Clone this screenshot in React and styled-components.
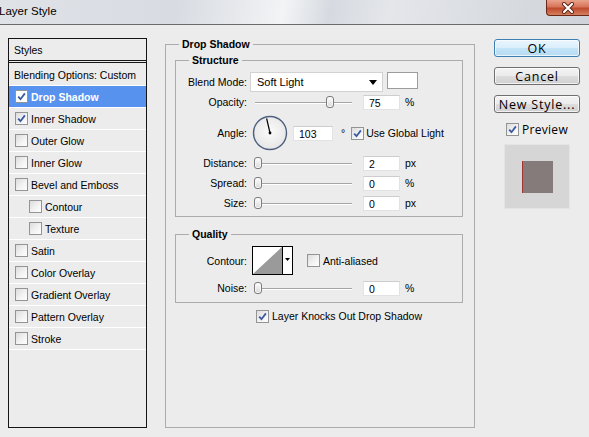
import React from "react";
import styled, { createGlobalStyle } from "styled-components";

const GlobalStyle = createGlobalStyle`
  html, body {
    margin: 0;
    padding: 0;
    background: #ececec;
  }
  body {
    font-family: "Liberation Sans", Arial, sans-serif;
    font-size: 10.5px;
    color: #000;
  }
  * {
    box-sizing: border-box;
  }
`;

const Window = styled.div`
  width: 589px;
  height: 437px;
  overflow: hidden;
  background: #ececec;
  display: flex;
  flex-direction: column;
`;

const TitleBar = styled.div`
  flex: none;
  height: 25px;
  display: flex;
  justify-content: space-between;
  align-items: flex-start;
  border-bottom: 1px solid #6b6b6b;
  background: linear-gradient(
    100deg,
    #dfe2e7 0%,
    #d8dce2 30%,
    #e9ebee 42%,
    #f3f4f6 48%,
    #d6dae0 56%,
    #e4e6ea 66%,
    #cfd3d9 100%
  );
`;

const Title = styled.div`
  font-size: 11.5px;
  line-height: 14px;
  padding-top: 4px;
  margin-left: -1px;
`;

const CloseButton = styled.div`
  width: 43px;
  height: 16px;
  display: flex;
  align-items: center;
  justify-content: center;
  border: 1px solid #6b2818;
  border-top: none;
  border-right: none;
  border-bottom-left-radius: 4px;
  background: linear-gradient(#e9a38c 0%, #d77458 45%, #bf4a2d 55%, #d4805f 100%);
`;

const Body = styled.div`
  display: flex;
  align-items: flex-start;
  padding: 13px 0 0 8px;
`;

/* ---------- Styles list ---------- */

const StylesPanel = styled.div`
  flex: none;
  width: 139px;
  height: 390px;
  border: 1px solid #151515;
`;

const PanelHeader = styled.div`
  height: 22px;
  padding-left: 5px;
  display: flex;
  align-items: center;
  border-bottom: 1px solid #151515;
`;

const StyleList = styled.div`
  margin-top: 1px;
  border-top: 1px solid #151515;
  padding-top: 1px;
`;

const StyleRow = styled.div`
  height: 22px;
  display: flex;
  align-items: center;
  gap: 3px;
  padding-left: ${(p) => (p.$plain ? 5 : p.$sub ? 20 : 6)}px;
  border-bottom: 1px solid #fff;
  background: ${(p) => (p.$selected ? "#5792ef" : "transparent")};
  color: ${(p) => (p.$selected ? "#fff" : "#000")};
  font-weight: ${(p) => (p.$selected ? "bold" : "normal")};
`;

/* ---------- Checkbox ---------- */

const CheckBox = styled.span`
  flex: none;
  width: 13px;
  height: 13px;
  display: inline-flex;
  align-items: center;
  justify-content: center;
  border: 1px solid #939494;
  background: ${(p) =>
    p.$white ? "#fff" : "linear-gradient(135deg, #dcdcdc 0%, #f4f4f4 60%, #fdfdfd 100%)"};
`;

const Check = ({ checked, white }) => (
  <CheckBox $white={white}>
    {checked && (
      <svg width="9" height="9" viewBox="0 0 9 9">
        <path d="M1.2 4.6 L3.5 7.2 L7.9 1.4" fill="none" stroke="#3b5aa2" strokeWidth="1.8" />
      </svg>
    )}
  </CheckBox>
);

/* ---------- Group boxes ---------- */

const Group = styled.fieldset`
  margin: ${(p) => p.$mt || 0}px 0 0 ${(p) => p.$ml || 0}px;
  min-width: 0;
  border: 1px solid #acacac;
  padding: ${(p) => p.$pad};
  width: ${(p) => (p.$w ? `${p.$w}px` : "auto")};
  height: ${(p) => (p.$h ? `${p.$h}px` : "auto")};
  flex: none;
`;

const GroupTitle = styled.legend`
  font-weight: bold;
  font-size: 10.5px;
  line-height: 13px;
  padding: 0 3px;
  margin-left: ${(p) => p.$indent}px;
`;

const Row = styled.div`
  display: flex;
  align-items: center;
  height: ${(p) => p.$h}px;
  margin-top: ${(p) => p.$mt || 0}px;
  padding-left: ${(p) => p.$pl || 0}px;
`;

const Inline = styled.span`
  display: flex;
  align-items: center;
  margin-left: ${(p) => p.$ml}px;
`;

const Label = styled.span`
  flex: none;
  width: 71px;
  margin-right: 5px;
  text-align: right;
`;

const Select = styled.div`
  flex: none;
  width: 133px;
  height: 20px;
  margin-left: -2px;
  padding: 0 5px 0 6px;
  display: flex;
  align-items: center;
  justify-content: space-between;
  background: #fff;
  border: 1px solid #d2d2d2;
  font-size: 11px;
`;

const Swatch = styled.div`
  flex: none;
  align-self: flex-start;
  width: 31px;
  height: 17px;
  margin-left: 4px;
  background: #fff;
  border: 1px solid #9c9c9c;
`;

const Field = styled.div`
  flex: none;
  width: ${(p) => p.$w || 37}px;
  height: 15px;
  margin-left: ${(p) => p.$ml ?? 11}px;
  padding-left: 5px;
  line-height: 14px;
  background: #fff;
  border: 1px solid #e2e2e2;
  border-top-color: #cdcdcd;
`;

const Unit = styled.span`
  margin-left: ${(p) => p.$ml || 5}px;
`;

const Track = styled.div`
  position: relative;
  flex: none;
  width: 100px;
  height: 14px;
  &::before {
    content: "";
    position: absolute;
    left: 3px;
    right: 0;
    top: 7px;
    height: 1px;
    background: #a5a5a5;
    box-shadow: 0 1px 0 #fff;
  }
`;

const Thumb = styled.span`
  position: absolute;
  top: 1px;
  width: 8px;
  height: 12px;
  border: 1px solid #7c7c7c;
  border-radius: 3px;
  background: linear-gradient(#ffffff, #d9d9d9);
  box-shadow: inset 0 0 0 1px #f6f6f6;
`;

const Slider = ({ value }) => (
  <Track>
    <Thumb style={{ left: `${2 + value * 96}px` }} />
  </Track>
);

const DialWrap = styled.div`
  flex: none;
  width: 36px;
  height: 36px;
`;

const Dial = ({ angle }) => {
  const r = (angle * Math.PI) / 180;
  const x = 18 + 15 * Math.cos(r);
  const y = 18 - 15 * Math.sin(r);
  return (
    <DialWrap>
      <svg width="36" height="36" viewBox="0 0 36 36">
        <defs>
          <radialGradient id="dialFill" cx="50%" cy="45%" r="60%">
            <stop offset="0%" stopColor="#fbfbfb" />
            <stop offset="100%" stopColor="#e4e4e4" />
          </radialGradient>
        </defs>
        <circle cx="18" cy="18" r="16.5" fill="url(#dialFill)" stroke="#4f5f80" strokeWidth="1.4" />
        <line x1="18" y1="18" x2={x} y2={y} stroke="#000" strokeWidth="1.2" />
        <circle cx="18" cy="18" r="1.4" fill="#000" />
      </svg>
    </DialWrap>
  );
};

const ContourBox = styled.div`
  flex: none;
  width: 41px;
  height: 29px;
`;

const CheckLabel = styled.span`
  margin-left: ${(p) => p.$ml || 3}px;
`;

/* ---------- Right column ---------- */

const SideColumn = styled.div`
  flex: none;
  width: 86px;
  margin-left: 19px;
  display: flex;
  flex-direction: column;
  align-items: center;
`;

const Button = styled.div`
  width: 86px;
  height: 18px;
  margin-top: ${(p) => p.$mt}px;
  display: flex;
  align-items: center;
  justify-content: center;
  font-family: "Open Sans", "Liberation Sans", sans-serif;
  font-size: 12.5px;
  letter-spacing: 0.8px;
  border-radius: 3px;
  border: 1px solid ${(p) => (p.$primary ? "#3c7fb1" : "#707070")};
  background: ${(p) =>
    p.$primary
      ? "linear-gradient(#eaf5fd 0%, #d9eefb 50%, #c4e4f8 51%, #b6dbf3 100%)"
      : "linear-gradient(#f4f4f4 0%, #ebebeb 50%, #dddddd 51%, #d0d0d0 100%)"};
  box-shadow: inset 0 0 0 1px rgba(255, 255, 255, 0.7);
`;

const PreviewToggle = styled.div`
  margin-top: 10px;
  height: 12px;
  display: flex;
  align-items: center;
  gap: 3px;
  font-family: "Open Sans", "Liberation Sans", sans-serif;
  font-size: 12px;
  letter-spacing: 0.3px;
`;

const PreviewBox = styled.div`
  margin-top: 9px;
  width: 66px;
  height: 65px;
  display: flex;
  align-items: center;
  justify-content: center;
  background: #d6d6d6;
  border: 1px solid #e4e4e4;
`;

const PreviewSwatch = styled.div`
  width: 31px;
  height: 32px;
  background: #857b7b;
  border-left: 1px solid #a33232;
`;

const STYLES = [
  { label: "Drop Shadow", checked: true, selected: true },
  { label: "Inner Shadow", checked: true },
  { label: "Outer Glow" },
  { label: "Inner Glow" },
  { label: "Bevel and Emboss" },
  { label: "Contour", sub: true },
  { label: "Texture", sub: true },
  { label: "Satin" },
  { label: "Color Overlay" },
  { label: "Gradient Overlay" },
  { label: "Pattern Overlay" },
  { label: "Stroke" },
];

export default function App() {
  return (
    <Window>
      <GlobalStyle />
      <TitleBar>
        <Title>Layer Style</Title>
        <CloseButton>
          <svg width="14" height="12" viewBox="0 0 14 12">
            <path d="M3 2 L11 10 M11 2 L3 10" stroke="#5a2316" strokeWidth="4" strokeLinecap="round" />
            <path d="M3 2 L11 10 M11 2 L3 10" stroke="#fff" strokeWidth="2.2" strokeLinecap="round" />
          </svg>
        </CloseButton>
      </TitleBar>

      <Body>
        <StylesPanel>
          <PanelHeader>Styles</PanelHeader>
          <StyleList>
            <StyleRow $plain>Blending Options: Custom</StyleRow>
            {STYLES.map((s) => (
              <StyleRow key={s.label} $sub={s.sub} $selected={s.selected}>
                <Check checked={s.checked} white={s.selected} />
                {s.label}
              </StyleRow>
            ))}
          </StyleList>
        </StylesPanel>

        <Group $pad="0 11px 0 9px" $w={310} $h={390} $ml={18}>
          <GroupTitle $indent={4}>Drop Shadow</GroupTitle>

          <Group $pad="5px 0 5px 0" $mt={3}>
            <GroupTitle $indent={13}>Structure</GroupTitle>
            <Row $h={20}>
              <Label>Blend Mode:</Label>
              <Select>
                Soft Light
                <svg width="8" height="5" viewBox="0 0 8 5">
                  <path d="M0 0 H8 L4 5 Z" fill="#000" />
                </svg>
              </Select>
              <Swatch />
            </Row>
            <Row $h={16} $mt={2}>
              <Label>Opacity:</Label>
              <Slider value={0.75} />
              <Field>75</Field>
              <Unit>%</Unit>
            </Row>
            <Row $h={36} $mt={5}>
              <Label>Angle:</Label>
              <Dial angle={103} />
              <Field $w={40} $ml={5}>103</Field>
              <Unit $ml={8}>°</Unit>
              <Inline $ml={6}>
                <Check checked />
                <CheckLabel $ml={2}>Use Global Light</CheckLabel>
              </Inline>
            </Row>
            <Row $h={16} $mt={4}>
              <Label>Distance:</Label>
              <Slider value={0} />
              <Field>2</Field>
              <Unit>px</Unit>
            </Row>
            <Row $h={16} $mt={4}>
              <Label>Spread:</Label>
              <Slider value={0} />
              <Field>0</Field>
              <Unit>%</Unit>
            </Row>
            <Row $h={16} $mt={4}>
              <Label>Size:</Label>
              <Slider value={0} />
              <Field>0</Field>
              <Unit>px</Unit>
            </Row>
          </Group>

          <Group $pad="5px 0 6px 0" $mt={11}>
            <GroupTitle $indent={13}>Quality</GroupTitle>
            <Row $h={29}>
              <Label>Contour:</Label>
              <ContourBox>
                <svg width="41" height="29" viewBox="0 0 41 29">
                  <rect x="0.5" y="0.5" width="40" height="28" fill="#fff" stroke="#000" />
                  <polygon points="1,28 30,1 30,28" fill="#9a9a9a" />
                  <line x1="30.5" y1="0.5" x2="30.5" y2="28.5" stroke="#000" />
                  <path d="M33 12 H38 L35.5 15 Z" fill="#000" />
                </svg>
              </ContourBox>
              <Inline $ml={14}>
                <Check />
                <CheckLabel>Anti-aliased</CheckLabel>
              </Inline>
            </Row>
            <Row $h={16} $mt={5}>
              <Label>Noise:</Label>
              <Slider value={0} />
              <Field>0</Field>
              <Unit>%</Unit>
            </Row>
          </Group>

          <Row $h={14} $mt={6} $pl={81}>
            <Check checked />
            <CheckLabel>Layer Knocks Out Drop Shadow</CheckLabel>
          </Row>
        </Group>

        <SideColumn>
          <Button $primary $mt={1}>OK</Button>
          <Button $mt={10}>Cancel</Button>
          <Button $mt={10}>New Style...</Button>
          <PreviewToggle>
            <Check checked />
            Preview
          </PreviewToggle>
          <PreviewBox>
            <PreviewSwatch />
          </PreviewBox>
        </SideColumn>
      </Body>
    </Window>
  );
}
